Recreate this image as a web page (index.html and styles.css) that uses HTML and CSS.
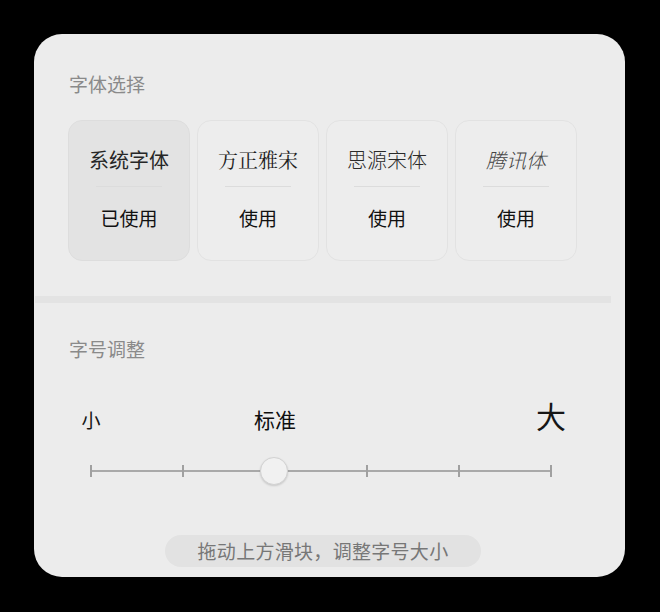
FILE: index.html
```html
<!DOCTYPE html>
<html lang="zh-CN">
<head>
<meta charset="utf-8">
<title>字体设置</title>
<link rel="stylesheet" href="styles.css">
</head>
<body>
<div class="panel">
  <div class="section-title">字体选择</div>
  <div class="cards">
    <div class="card card-active">
      <div class="card-name">系统字体</div>
      <div class="card-divider"></div>
      <div class="card-action">已使用</div>
    </div>
    <div class="card">
      <div class="card-name name-song">方正雅宋</div>
      <div class="card-divider"></div>
      <div class="card-action">使用</div>
    </div>
    <div class="card">
      <div class="card-name name-light">思源宋体</div>
      <div class="card-divider"></div>
      <div class="card-action">使用</div>
    </div>
    <div class="card">
      <div class="card-name name-italic">腾讯体</div>
      <div class="card-divider"></div>
      <div class="card-action">使用</div>
    </div>
  </div>
  <div class="band"></div>
  <div class="section-title section-title-2">字号调整</div>
  <div class="size-labels">
    <span class="lbl lbl-small">小</span>
    <span class="lbl lbl-std">标准</span>
    <span class="lbl lbl-big">大</span>
  </div>
  <div class="slider">
    <div class="slider-line"></div>
    <span class="tick"></span>
    <span class="tick"></span>
    <span class="tick"></span>
    <span class="tick"></span>
    <span class="tick"></span>
    <span class="tick"></span>
    <div class="thumb"></div>
  </div>
  <div class="hint">拖动上方滑块，调整字号大小</div>
</div>
</body>
</html>
```
FILE: styles.css
```css
html, body {
  margin: 0;
  padding: 0;
  background: #000;
}
body {
  width: 660px;
  height: 612px;
  overflow: hidden;
  font-family: "Noto Sans CJK SC", "Noto Sans", sans-serif;
}
.panel {
  box-sizing: border-box;
  width: 591px;
  height: 543px;
  margin: 34px 0 0 34px;
  background: #ececec;
  border-radius: 28px;
  display: flex;
  flex-direction: column;
  overflow: hidden;
}
.section-title {
  font-size: 19px;
  line-height: 26px;
  color: #8a8a8a;
  margin: 37px 0 0 35px;
}
.section-title-2 {
  margin-top: 33px;
}
.cards {
  display: flex;
  gap: 7px;
  margin: 23px 0 0 34px;
}
.card {
  box-sizing: border-box;
  width: 122px;
  height: 141px;
  border: 1.5px solid #e2e2e2;
  border-radius: 14px;
  background: #ededed;
  display: flex;
  flex-direction: column;
  align-items: center;
}
.card-active {
  background: #e3e3e3;
  border-color: #dddddd;
}
.card-name {
  font-size: 20px;
  line-height: 28px;
  margin-top: 25px;
  color: #262626;
}
.name-song {
  font-family: "Noto Serif CJK SC", "Liberation Serif", "Noto Sans CJK SC", serif;
  color: #1e1e1e;
}
.name-light {
  font-weight: 300;
  color: #2a2a2a;
}
.name-italic {
  font-style: italic;
  font-weight: 300;
  color: #444;
}
.card-divider {
  width: 66px;
  height: 1px;
  background: #dcdcdc;
  margin-top: 12px;
}
.card-action {
  font-size: 19px;
  line-height: 26px;
  margin-top: 18px;
  color: #111;
}
.band {
  width: 576px;
  height: 7px;
  margin: 35px 0 0 1px;
  background: #e3e3e3;
}
.size-labels {
  display: grid;
  grid-template-columns: repeat(6, 92px);
  align-items: baseline;
  margin: 33px 0 0 11px;
  color: #161616;
}
.lbl {
  justify-self: center;
  line-height: 40px;
}
.lbl-small {
  grid-column: 1;
  font-size: 19px;
}
.lbl-std {
  grid-column: 3;
  font-size: 21px;
  color: #0e0e0e;
}
.lbl-big {
  grid-column: 6;
  font-size: 30px;
}
.slider {
  position: relative;
  width: 462px;
  height: 28px;
  margin: 17px 0 0 56px;
  display: flex;
  justify-content: space-between;
  align-items: center;
}
.slider-line {
  position: absolute;
  left: 0;
  right: 0;
  top: 13px;
  height: 2px;
  background: #a9a9a9;
}
.tick {
  position: relative;
  width: 1.5px;
  height: 12px;
  background: #a0a0a0;
}
.thumb {
  position: absolute;
  left: 170px;
  top: 0;
  box-sizing: border-box;
  width: 28px;
  height: 28px;
  border-radius: 50%;
  background: #f1f1f1;
  border: 1px solid #d2d2d2;
  box-shadow: 0 1px 2px rgba(0, 0, 0, 0.15);
}
.hint {
  align-self: flex-start;
  margin: 50px 0 0 131px;
  box-sizing: border-box;
  width: 316px;
  height: 32px;
  border-radius: 16px;
  background: #e2e2e2;
  color: #777;
  font-size: 19px;
  line-height: 32px;
  text-align: center;
  letter-spacing: 0.3px;
}
```
